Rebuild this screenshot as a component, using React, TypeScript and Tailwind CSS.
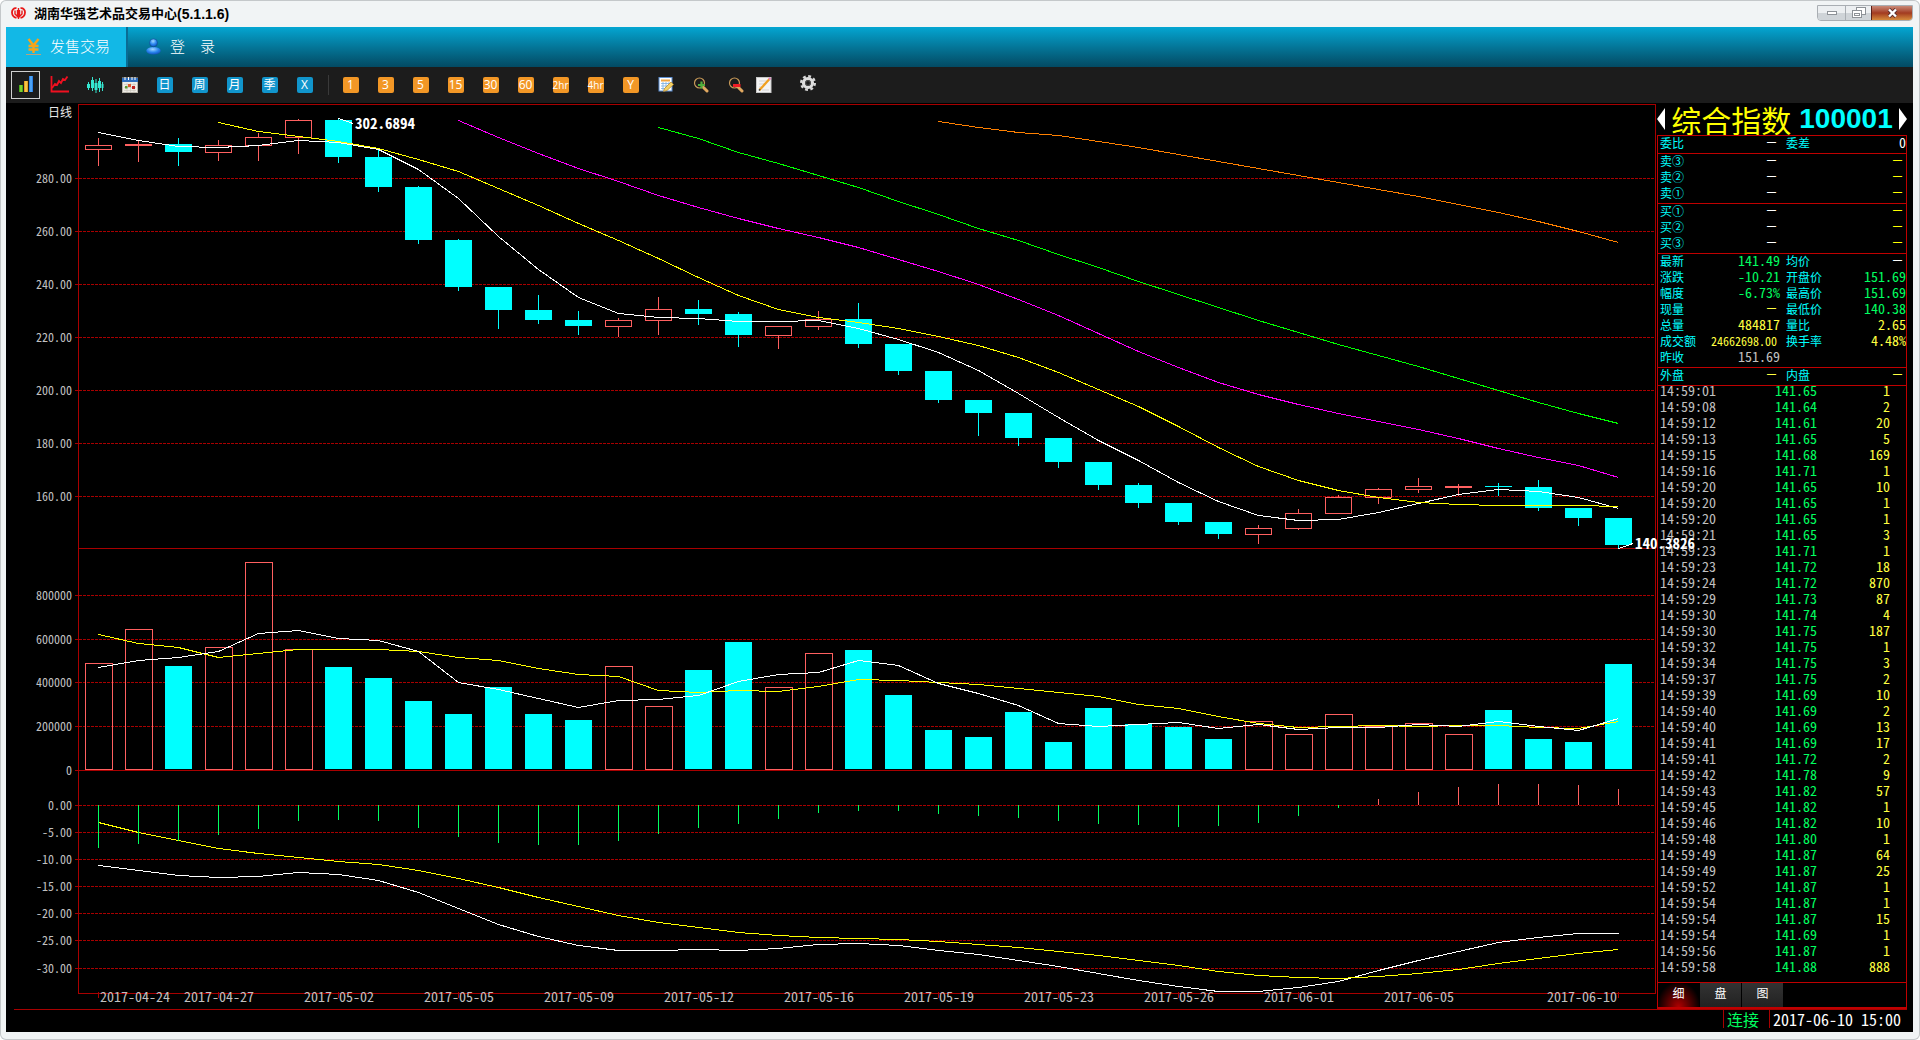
import type { ReactNode } from "react";

// [high, body top, body bottom, low, rising]
type Candle = [number, number, number, number, 0 | 1];

const CANDLES: Candle[] = [
  [138, 145, 149, 166, 1], [140, 144, 145, 162, 1], [138, 144, 152, 166, 0], [140, 145, 152, 161, 1],
  [133, 137, 145, 161, 1], [119, 120, 137, 154, 1], [118, 120, 157, 163, 0], [149, 157, 187, 192, 0],
  [186, 187, 240, 244, 0], [239, 240, 287, 291, 0], [287, 287, 310, 329, 0], [295, 310, 320, 324, 0],
  [311, 320, 326, 335, 0], [318, 320, 326, 337, 1], [297, 309, 320, 335, 1], [300, 309, 314, 325, 0],
  [312, 314, 335, 347, 0], [326, 326, 335, 349, 1], [311, 319, 326, 330, 1], [303, 319, 344, 348, 0],
  [344, 344, 371, 375, 0], [371, 371, 400, 403, 0], [400, 400, 413, 436, 0], [413, 413, 438, 446, 0],
  [438, 438, 462, 468, 0], [462, 462, 485, 490, 0], [483, 485, 503, 508, 0], [503, 503, 522, 525, 0],
  [522, 522, 534, 539, 0], [525, 528, 534, 544, 1], [509, 513, 528, 530, 1], [495, 497, 513, 513, 1],
  [488, 489, 497, 504, 1], [478, 486, 489, 493, 1], [484, 486, 487, 496, 1], [483, 486, 487, 496, 0],
  [480, 487, 508, 511, 0], [508, 508, 518, 526, 0], [518, 518, 545, 548, 0],
];

const VOLUMES = [
  663, 629, 666, 647, 562, 649, 667, 678, 701, 714, 687, 714, 720, 666, 706, 670, 642, 687, 653, 650,
  695, 730, 737, 712, 742, 708, 724, 727, 739, 721, 734, 714, 726, 723, 734, 710, 739, 742, 664,
];

const MACD = [
  848, 844, 841, 835, 829, 821, 820, 821, 828, 837, 843, 845, 845, 841, 834, 828, 824, 819, 813, 811,
  811, 814, 816, 818, 821, 824, 825, 827, 826, 823, 816, 808, 799, 792, 787, 784, 784, 785, 789,
];

const LINES: { color: string; from: number; ys: number[] }[] = [
  {
    color: "#ff8000",
    from: 21,
    ys: [121, 127, 132, 135, 141, 147, 154, 161, 168, 175, 182, 189, 196, 204, 212, 221, 231, 242],
  },
  {
    color: "#00ff00",
    from: 14,
    ys: [127, 138, 152, 163, 175, 187, 201, 214, 228, 240, 254, 267, 281, 294, 307, 320, 332, 344, 355, 366, 378, 390, 402, 413, 423],
  },
  {
    color: "#ff00ff",
    from: 9,
    ys: [120, 137, 153, 168, 181, 195, 207, 218, 228, 237, 247, 259, 271, 284, 299, 315, 333, 351, 367, 382, 394, 404, 413, 421, 429, 438, 448, 457, 465, 477],
  },
  {
    color: "#ffffff",
    from: 0,
    ys: [132, 140, 146, 147, 145, 140, 142, 149, 169, 198, 236, 269, 297, 313, 317, 318, 321, 321, 320, 328, 339, 352, 370, 393, 417, 440, 460, 482, 501, 515, 520, 519, 512, 503, 494, 489, 491, 497, 508],
  },
  {
    color: "#ffff00",
    from: 3,
    ys: [122, 131, 136, 141, 148, 159, 171, 188, 205, 223, 240, 258, 277, 295, 309, 317, 322, 328, 336, 345, 357, 372, 389, 406, 426, 447, 466, 480, 490, 497, 502, 504, 505, 505, 505, 506],
  },
  {
    color: "#ffff00",
    from: 0,
    ys: [634, 643, 647, 657, 653, 649, 649, 649, 651, 657, 660, 668, 674, 676, 690, 692, 690, 691, 686, 679, 680, 682, 684, 688, 692, 696, 704, 708, 716, 723, 727, 726, 725, 726, 725, 725, 727, 728, 721],
  },
  {
    color: "#ffffff",
    from: 0,
    ys: [667, 660, 657, 651, 633, 630, 638, 640, 651, 682, 689, 698, 707, 700, 699, 695, 681, 674, 672, 660, 665, 683, 693, 705, 723, 726, 724, 722, 728, 724, 729, 727, 727, 724, 726, 721, 726, 730, 718],
  },
  {
    color: "#ffffff",
    from: 0,
    ys: [865, 870, 875, 877, 876, 872, 874, 880, 892, 908, 924, 936, 945, 950, 950, 949, 950, 948, 944, 943, 945, 950, 954, 960, 966, 973, 980, 986, 991, 991, 987, 981, 970, 960, 951, 942, 937, 933, 933],
  },
  {
    color: "#ffff00",
    from: 0,
    ys: [822, 832, 840, 848, 853, 857, 861, 864, 870, 878, 887, 897, 906, 915, 922, 927, 932, 935, 937, 938, 939, 941, 944, 947, 951, 955, 960, 965, 971, 975, 977, 978, 976, 973, 969, 963, 958, 953, 949],
  },
];

const GRID: [number, string][] = [
  [178, "280.00"], [231, "260.00"], [284, "240.00"], [337, "220.00"], [390, "200.00"], [443, "180.00"], [496, "160.00"],
  [595, "800000"], [639, "600000"], [682, "400000"], [726, "200000"], [770, "0"],
  [805, "0.00"], [832, "-5.00"], [859, "-10.00"], [886, "-15.00"], [913, "-20.00"], [940, "-25.00"], [968, "-30.00"],
];

const DATES: [number, string][] = [
  [0, "2017-04-24"], [3, "2017-04-27"], [6, "2017-05-02"], [9, "2017-05-05"], [12, "2017-05-09"],
  [15, "2017-05-12"], [18, "2017-05-16"], [21, "2017-05-19"], [24, "2017-05-23"], [27, "2017-05-26"],
  [30, "2017-06-01"], [33, "2017-06-05"], [38, "2017-06-10"],
];

const TICKS: [string, string, number][] = [
  ["14:59:01", "141.65", 1], ["14:59:08", "141.64", 2], ["14:59:12", "141.61", 20], ["14:59:13", "141.65", 5],
  ["14:59:15", "141.68", 169], ["14:59:16", "141.71", 1], ["14:59:20", "141.65", 10], ["14:59:20", "141.65", 1],
  ["14:59:20", "141.65", 1], ["14:59:21", "141.65", 3], ["14:59:23", "141.71", 1], ["14:59:23", "141.72", 18],
  ["14:59:24", "141.72", 870], ["14:59:29", "141.73", 87], ["14:59:30", "141.74", 4], ["14:59:30", "141.75", 187],
  ["14:59:32", "141.75", 1], ["14:59:34", "141.75", 3], ["14:59:37", "141.75", 2], ["14:59:39", "141.69", 10],
  ["14:59:40", "141.69", 2], ["14:59:40", "141.69", 13], ["14:59:41", "141.69", 17], ["14:59:41", "141.72", 2],
  ["14:59:42", "141.78", 9], ["14:59:43", "141.82", 57], ["14:59:45", "141.82", 1], ["14:59:46", "141.82", 10],
  ["14:59:48", "141.80", 1], ["14:59:49", "141.87", 64], ["14:59:49", "141.87", 25], ["14:59:52", "141.87", 1],
  ["14:59:54", "141.87", 1], ["14:59:54", "141.87", 15], ["14:59:54", "141.69", 1], ["14:59:56", "141.87", 1],
  ["14:59:58", "141.88", 888],
];

const cx = (i: number) => 98 + i * 40;

const RED = "#a80000";
const UP = "#ff6060";

function Chart() {
  return (
    <svg
      viewBox="6 103 1651 906"
      className="relative z-10 block h-auto w-full overflow-visible font-['Noto_Sans_Mono_CJK_SC','Liberation_Mono',monospace]"
      role="img"
      aria-label="日线"
    >
      <g shapeRendering="crispEdges" fill="none" strokeWidth="1">
        {GRID.map(([y, label]) => (
          <g key={label} stroke={RED}>
            <path d={`M75 ${y + 0.5}H79`} />
            <path d={`M79 ${y + 0.5}H1655`} strokeDasharray={label === "0" ? undefined : "3 1"} />
          </g>
        ))}
        <path d="M78.5 104V993.5H1655.5V104.5H78" stroke={RED} />
        <path d="M78 548.5H1655" stroke={RED} />
        {DATES.map(([i]) => (
          <path key={i} d={`M${cx(i) + 0.5} 992V998`} stroke={RED} />
        ))}

        {CANDLES.map(([high, top, bottom, low, up], i) => {
          const x = cx(i);
          if (!up) {
            return (
              <g key={i} fill="#00ffff">
                <rect x={x} y={high} width="1" height={low - high} />
                <rect x={x - 13} y={top} width="27" height={bottom - top} />
                <rect x={x - 13} y={VOLUMES[i]} width="27" height={769 - VOLUMES[i]} />
              </g>
            );
          }
          return (
            <g key={i} stroke={UP}>
              <path d={`M${x + 0.5} ${high}V${top}M${x + 0.5} ${bottom}V${low}`} />
              <rect x={x - 12.5} y={top + 0.5} width="26" height={bottom - top} />
              <rect x={x - 12.5} y={VOLUMES[i] + 0.5} width="27" height={769 - VOLUMES[i]} />
            </g>
          );
        })}

        {LINES.map(({ color, from, ys }, n) => (
          <polyline
            key={n}
            stroke={color}
            points={ys.map((y, i) => `${cx(from + i) + 0.5},${y + 0.5}`).join(" ")}
          />
        ))}

        {MACD.map((y, i) => (
          <path key={i} d={`M${cx(i) + 0.5} 805V${y}`} stroke={y > 805 ? "#00ff60" : UP} />
        ))}
        <path d="M338.5 118.5L353 123.5M1618.5 548.5L1633 543.5" stroke="#fff" />
      </g>

      <g fontSize="12" fill="#c0c0c0" textAnchor="end">
        {GRID.map(([y, label]) => (
          <text key={label} x="72" y={y + 5}>{label}</text>
        ))}
      </g>
      <g fontSize="14" fill="#c0c0c0" textAnchor="middle">
        {DATES.map(([i, label]) => (
          <text key={label} x={i === 0 ? 135 : i === 38 ? 1582 : cx(i) + 1} y="1002">{label}</text>
        ))}
      </g>
      <text x="48" y="117" fontSize="12" fill="#e8e8e8">日线</text>
      <g fontSize="15" fontWeight="700" fill="#fff">
        <text x="355" y="129">302.6894</text>
        <text x="1635" y="549">140.3826</text>
      </g>
    </svg>
  );
}

function TileButton({ label, blue }: { label: string; blue?: boolean }) {
  return (
    <button className="flex h-8 w-[35px] items-center justify-center">
      <span
        className={`flex size-4 items-center justify-center rounded-[2px] font-['Open_Sans','Noto_Sans_CJK_SC',sans-serif] leading-none text-white ${
          blue ? "bg-[#1195cc]" : "bg-[#f29726]"
        } ${label.length > 2 ? "text-[10px]" : "text-xs"}`}
      >
        {label}
      </span>
    </button>
  );
}

function IconButton({ label, children, narrow }: { label: string; children: ReactNode; narrow?: boolean }) {
  return (
    <button aria-label={label} className={`flex h-8 items-center justify-center ${narrow ? "w-[21px]" : "w-[35px]"}`}>
      {children}
    </button>
  );
}

function Toolbar() {
  return (
    <div className="flex h-9 items-center bg-[#1c1c1c] pl-[5px]">
      <button
        aria-label="柱状图"
        className="mr-0.5 flex h-7 w-[29px] items-center justify-center border border-[#d0d0d0]"
      >
        <svg width="16" height="18" viewBox="0 0 16 18">
          <defs>
            <linearGradient id="g1"><stop stopColor="#2c9a10" /><stop offset=".5" stopColor="#9be03a" /><stop offset="1" stopColor="#2c9a10" /></linearGradient>
            <linearGradient id="g2"><stop stopColor="#d98a10" /><stop offset=".5" stopColor="#ffd75a" /><stop offset="1" stopColor="#d98a10" /></linearGradient>
            <linearGradient id="g3"><stop stopColor="#1b6fd8" /><stop offset=".5" stopColor="#5db4ff" /><stop offset="1" stopColor="#1b6fd8" /></linearGradient>
          </defs>
          <rect x="1" y="9" width="4" height="7" fill="url(#g1)" />
          <rect x="6" y="5" width="4" height="11" fill="url(#g2)" />
          <rect x="11" y="0" width="4" height="16" fill="url(#g3)" />
        </svg>
      </button>
      <IconButton label="走势">
        <svg width="20" height="18" viewBox="0 0 20 18" fill="none" stroke="#f01020" strokeWidth="1.8">
          <path d="M1.500 0V15.500H19" />
          <path d="M2 12L5 8L7 9L9 5L11 7L13 3L15 4L17.500 .5" />
        </svg>
      </IconButton>
      <IconButton label="K线">
        <svg width="18" height="18" viewBox="0 0 18 18" fill="#35e6d0">
          <path d="M2 6h1v8h-1zM6 1h1v14h-1zM9.500 3h1v14h-1zM13 2h1v14h-1zM16 6h1v9h-1z" />
          <path d="M1 8h3v4h-3zM5 4h3v8h-3zM8.500 7h3v7h-3zM12 5h3v7h-3zM15.500 8h2v4h-2z" />
        </svg>
      </IconButton>
      <IconButton label="日历">
        <svg width="16" height="16" viewBox="0 0 16 16">
          <rect x=".5" y="1" width="15" height="14.500" fill="#eeece6" stroke="#b8b4aa" />
          <rect y="1" width="16" height="4" fill="#2e6fc0" />
          <path d="M3 0v3M6.500 0v3M10 0v3M13 0v3" stroke="#fff" />
          <path d="M2 7.500h12M2 10.500h12M2 13.500h12M5 6v9M8.500 6v9M12 6v9" stroke="#c9c5bb" strokeWidth=".6" />
          <rect x="3" y="9" width="2.500" height="2.500" fill="#5a9a30" />
          <rect x="6" y="7" width="3" height="3" fill="#e05a30" />
          <rect x="10" y="9" width="3" height="3" fill="#c02020" />
        </svg>
      </IconButton>
      {["日", "周", "月", "季", "X"].map((t) => (
        <TileButton key={t} label={t} blue />
      ))}
      <span className="ml-1.5 mr-1 h-5 w-px bg-[#3a3a3a]" />
      {["1", "3", "5", "15", "30", "60", "2hr", "4hr", "Y"].map((t) => (
        <TileButton key={t} label={t} />
      ))}
      <IconButton label="编辑日历">
        <svg width="16" height="16" viewBox="0 0 16 16">
          <rect x="1" y=".5" width="13" height="13.500" fill="#fff" stroke="#5c8ed0" />
          <rect x="3" y="2.500" width="9" height="2" fill="#f2a640" />
          <path d="M3 6.500h9M3 9h9M3 11.500h6M5 5v8M8 5v8M11 5v5" stroke="#7aaee0" strokeWidth=".8" />
          <path d="M5.500 14.500L6.500 11.500L13 5L15.500 7.500L9 13.500Z" fill="#f4d264" stroke="#b48324" strokeWidth=".7" />
        </svg>
      </IconButton>
      <IconButton label="放大">
        <svg width="16" height="16" viewBox="0 0 16 16" fill="none">
          <circle cx="6.500" cy="6" r="5" stroke="#c89a58" strokeWidth="1.200" />
          <path d="M10.500 10.500L14 14" stroke="#e0a860" strokeWidth="3" strokeLinecap="round" />
          <path d="M8.500 4.500v7M5 8h7" stroke="#4fae3c" strokeWidth="2.200" />
        </svg>
      </IconButton>
      <IconButton label="缩小">
        <svg width="16" height="16" viewBox="0 0 16 16" fill="none">
          <circle cx="6.500" cy="6" r="5" stroke="#c89a58" strokeWidth="1.200" />
          <path d="M10.500 10.500L14 14" stroke="#e0a860" strokeWidth="3" strokeLinecap="round" />
          <path d="M5 8.500h7.500" stroke="#f01c24" strokeWidth="3" />
        </svg>
      </IconButton>
      <IconButton label="画线" narrow>
        <svg width="16" height="16" viewBox="0 0 16 16">
          <rect x=".5" y=".5" width="14.500" height="15" fill="#f4f4f4" stroke="#c8c8c8" />
          <path d="M3 4h8M3 7h6M3 10h4M6 13h7" stroke="#d4d4d4" />
          <path d="M3.500 13L13.500 2" stroke="#f0a020" strokeWidth="2.200" />
          <path d="M13 2.600L14.500 1" stroke="#e080c0" strokeWidth="2.200" />
          <path d="M3 13.600L4.200 12.300" stroke="#444" strokeWidth="1.500" />
        </svg>
      </IconButton>
      <span className="w-4" />
      <IconButton label="设置">
        <svg width="18" height="20" viewBox="0 0 18 20" fill="none">
          <circle cx="9" cy="8" r="6.800" stroke="#d8d8d8" strokeWidth="2.400" strokeDasharray="2.840 2.500" />
          <circle cx="9" cy="8" r="4.500" stroke="#dedede" strokeWidth="3.200" />
          <circle cx="9" cy="8" r="2.400" stroke="#555" strokeWidth="1" />
        </svg>
      </IconButton>
    </div>
  );
}

function TitleBar() {
  return (
    <header className="flex h-[27px] items-start justify-between pl-[5px]">
      <div className="flex h-[27px] items-center gap-2">
        <svg width="15" height="13" viewBox="0 0 15 13" fill="none" stroke="#e81818" strokeWidth="1.800">
          <path d="M5.500 1.200C2.500 .8 .9 3 1 5.500C1.100 8 3 10.300 5.500 11" />
          <path d="M9.500 1.200C12.500 .8 14.100 3 14 5.500C13.900 8 12 10.300 9.500 11" />
          <path d="M4 3.500V7L6.500 9.500V3M11 3.500V7L8.500 9.500V3M7.500 1V12" strokeWidth="1.400" />
        </svg>
        <h1 className="flex items-center font-['Liberation_Sans','Noto_Sans_CJK_SC',sans-serif] text-[13px] font-bold leading-[22px] text-black">
          湖南华强艺术品交易中心<span className="text-sm">(5.1.1.6)</span>
        </h1>
      </div>
      <div className="mt-[5px] flex h-4 overflow-hidden rounded-b border border-[#a9aeb3]">
        <button aria-label="最小化" className="flex w-[27px] items-center justify-center bg-linear-to-b from-[#eceff1] from-50% to-[#cfd4d8] to-50%">
          <span className="h-1 w-2.5 border border-[#8d9297] bg-white" />
        </button>
        <button aria-label="还原" className="flex w-[26px] items-center justify-center border-l border-[#a9aeb3] bg-linear-to-b from-[#eceff1] from-50% to-[#cfd4d8] to-50%">
          <svg width="15" height="12" viewBox="0 0 15 12" fill="#fff" stroke="#8d9297" shapeRendering="crispEdges">
            <rect x="5.500" y=".5" width="9" height="7" />
            <rect x="1.500" y="3.500" width="9" height="7" />
            <rect x="3.500" y="6.500" width="5" height="2" />
          </svg>
        </button>
        <button aria-label="关闭" className="flex w-[41px] items-center justify-center border-l border-[#5a2018] bg-linear-to-b from-[#c98a78] via-[#a23a20] via-50% to-[#d58a3c]">
          <svg width="11" height="10" viewBox="0 0 11 10">
            <path d="M2 1.500L9 8.500M9 1.500L2 8.500" stroke="#5a3030" strokeWidth="4" />
            <path d="M2 1.500L9 8.500M9 1.500L2 8.500" stroke="#fff" strokeWidth="2.400" />
          </svg>
        </button>
      </div>
    </header>
  );
}

function MainMenu() {
  return (
    <nav className="flex h-10 bg-linear-to-b from-[#04a6d2] to-[#034a63] font-['Noto_Sans_CJK_SC',sans-serif] text-[15px] font-light text-white">
      <button className="flex w-[122px] items-center border-r-2 border-[#0a6c94] bg-[#12b8e6] pb-0.5 pl-5">
        <svg width="15" height="17" viewBox="0 0 15 17" fill="none" stroke="#f5a51c" strokeWidth="2.400">
          <path d="M2.500 1L7.500 7.500L12.500 1M7.500 7V15M2.500 8H12.500M2.500 11.500H12.500" />
          <path d="M0 16.500H15" stroke="#b9a27a" strokeWidth="1" />
        </svg>
        <span className="ml-[9px]">发售交易</span>
      </button>
      <button className="flex items-center pb-0.5 pl-[18px]">
        <svg width="15" height="17" viewBox="0 0 15 17">
          <defs>
            <radialGradient id="user" cx=".45" cy=".3" r=".8">
              <stop stopColor="#9fd8ff" />
              <stop offset=".5" stopColor="#2a86f0" />
              <stop offset="1" stopColor="#0a3ca8" />
            </radialGradient>
          </defs>
          <ellipse cx="7.500" cy="12.800" rx="7.200" ry="3.800" fill="url(#user)" />
          <circle cx="7.500" cy="4.800" r="4" fill="url(#user)" stroke="#0c4f8c" strokeWidth=".6" />
        </svg>
        <span className="ml-[9px]">登　录</span>
      </button>
    </nav>
  );
}

const GREEN = "text-[#00ff60]";
const YELLOW = "text-[#ffff40]";

function Cell({ label, value, tone = "text-white", small }: { label?: string; value?: string; tone?: string; small?: boolean }) {
  return (
    <div className="flex h-4 items-start justify-between leading-[13px]">
      <dt className="text-xs leading-[13px] text-[#00ffff]">{label}</dt>
      {value === "—" ? (
        <dd className={`pr-1 font-['Liberation_Sans',sans-serif] text-[9px] font-bold leading-[13px] ${tone}`}>—</dd>
      ) : (
        <dd className={`${small ? "pr-[3px] text-xs" : "text-sm"} leading-[13px] ${tone}`}>{value}</dd>
      )}
    </div>
  );
}

function Section({ children }: { children: ReactNode }) {
  return <dl className="grid grid-cols-2 gap-x-1.5 border-t border-[#c00000] pb-px pl-0.5">{children}</dl>;
}

function QuotePanel() {
  return (
    <aside className="mr-1.5 flex w-[250px] shrink-0 flex-col font-['Noto_Sans_Mono_CJK_SC','Liberation_Mono',monospace]">
      <div className="flex h-8 items-center justify-between">
        <button aria-label="上一个" className="h-[22px] w-2 bg-white [clip-path:polygon(100%_0,100%_100%,0_50%)]" />
        <h2 className="flex items-center gap-2 whitespace-nowrap leading-8">
          <span className="font-['Noto_Sans_CJK_SC',sans-serif] text-[30px] text-[#ffff00]">综合指数</span>
          <span className="font-['Liberation_Sans',sans-serif] text-[28px] font-bold text-[#00ffff]">100001</span>
        </h2>
        <button aria-label="下一个" className="h-[22px] w-2 bg-white [clip-path:polygon(0_0,0_100%,100%_50%)]" />
      </div>

      <div className="flex flex-1 flex-col border-x border-b-2 border-[#c00000]">
        <Section>
          <Cell label="委比" value="—" />
          <Cell label="委差" value="0" />
        </Section>
        {["卖③ 卖② 卖①", "买① 买② 买③"].map((group) => (
          <Section key={group}>
            {group.split(" ").map((label) => (
              <div key={label} className="col-span-2 grid grid-cols-2 gap-x-1.5">
                <Cell label={label} value="—" />
                <Cell value="—" tone="text-[#ffff00]" />
              </div>
            ))}
          </Section>
        ))}
        <Section>
          <Cell label="最新" value="141.49" tone={GREEN} />
          <Cell label="均价" value="—" />
          <Cell label="涨跌" value="-10.21" tone={GREEN} />
          <Cell label="开盘价" value="151.69" tone={GREEN} />
          <Cell label="幅度" value="-6.73%" tone={GREEN} />
          <Cell label="最高价" value="151.69" tone={GREEN} />
          <Cell label="现量" value="—" tone={YELLOW} />
          <Cell label="最低价" value="140.38" tone={GREEN} />
          <Cell label="总量" value="484817" tone={YELLOW} />
          <Cell label="量比" value="2.65" tone={YELLOW} />
          <Cell label="成交额" value="24662698.00" tone={YELLOW} small />
          <Cell label="换手率" value="4.48%" tone={YELLOW} />
          <Cell label="昨收" value="151.69" tone="text-[#c0c0c0]" />
        </Section>
        <Section>
          <Cell label="外盘" value="—" tone={YELLOW} />
          <Cell label="内盘" value="—" tone={YELLOW} />
        </Section>

        <div className="flex-1 border-t border-[#c00000] pb-1">
          <table className="w-full table-fixed text-sm leading-[8px]">
            <tbody>
              {TICKS.map(([time, price, qty], i) => (
                <tr key={i} className="h-4 align-top">
                  <td className="w-20 p-0 pl-0.5 text-[#c0c0c0]">{time}</td>
                  <td className={`w-[79px] p-0 text-right ${GREEN}`}>{price}</td>
                  <td className={`p-0 pr-4 text-right ${YELLOW}`}>{qty}</td>
                </tr>
              ))}
            </tbody>
          </table>
        </div>

        <div className="flex h-[25px] gap-px border-t border-[#c00000] text-xs font-medium text-white">
          <button className="w-[41px] bg-[radial-gradient(ellipse_at_bottom,#b00000,#000_75%)] pb-1">细</button>
          <button className="w-[41px] bg-linear-to-b from-[#333] to-[#222] pb-1">盘</button>
          <button className="w-[41px] bg-linear-to-b from-[#333] to-[#222] pb-1">图</button>
        </div>
      </div>
    </aside>
  );
}

export default function App() {
  return (
    <div className="flex min-h-screen flex-col rounded-md bg-[#f1f4f5] pl-1.5 pr-[7px] shadow-[inset_0_0_0_1px_#c4c8ca]">
      <TitleBar />
      <MainMenu />
      <Toolbar />
      <main className="flex-1 bg-black">
        <div className="flex">
          <div className="min-w-0 flex-1">
            <Chart />
          </div>
          <QuotePanel />
        </div>
        <footer className="ml-2 mr-1.5 flex h-[23px] items-start justify-end border-t border-[#a80000] font-['Noto_Sans_Mono_CJK_SC','Liberation_Mono',monospace] text-base leading-[18px]">
          <span className="w-[46px] border-l border-[#a80000] pl-[3px] text-[#00ff60]">连接</span>
          <time className="border-l border-[#a80000] pl-[3px] pr-1.5 text-white">2017-06-10 15:00</time>
        </footer>
      </main>
      <div className="h-2" />
    </div>
  );
}
